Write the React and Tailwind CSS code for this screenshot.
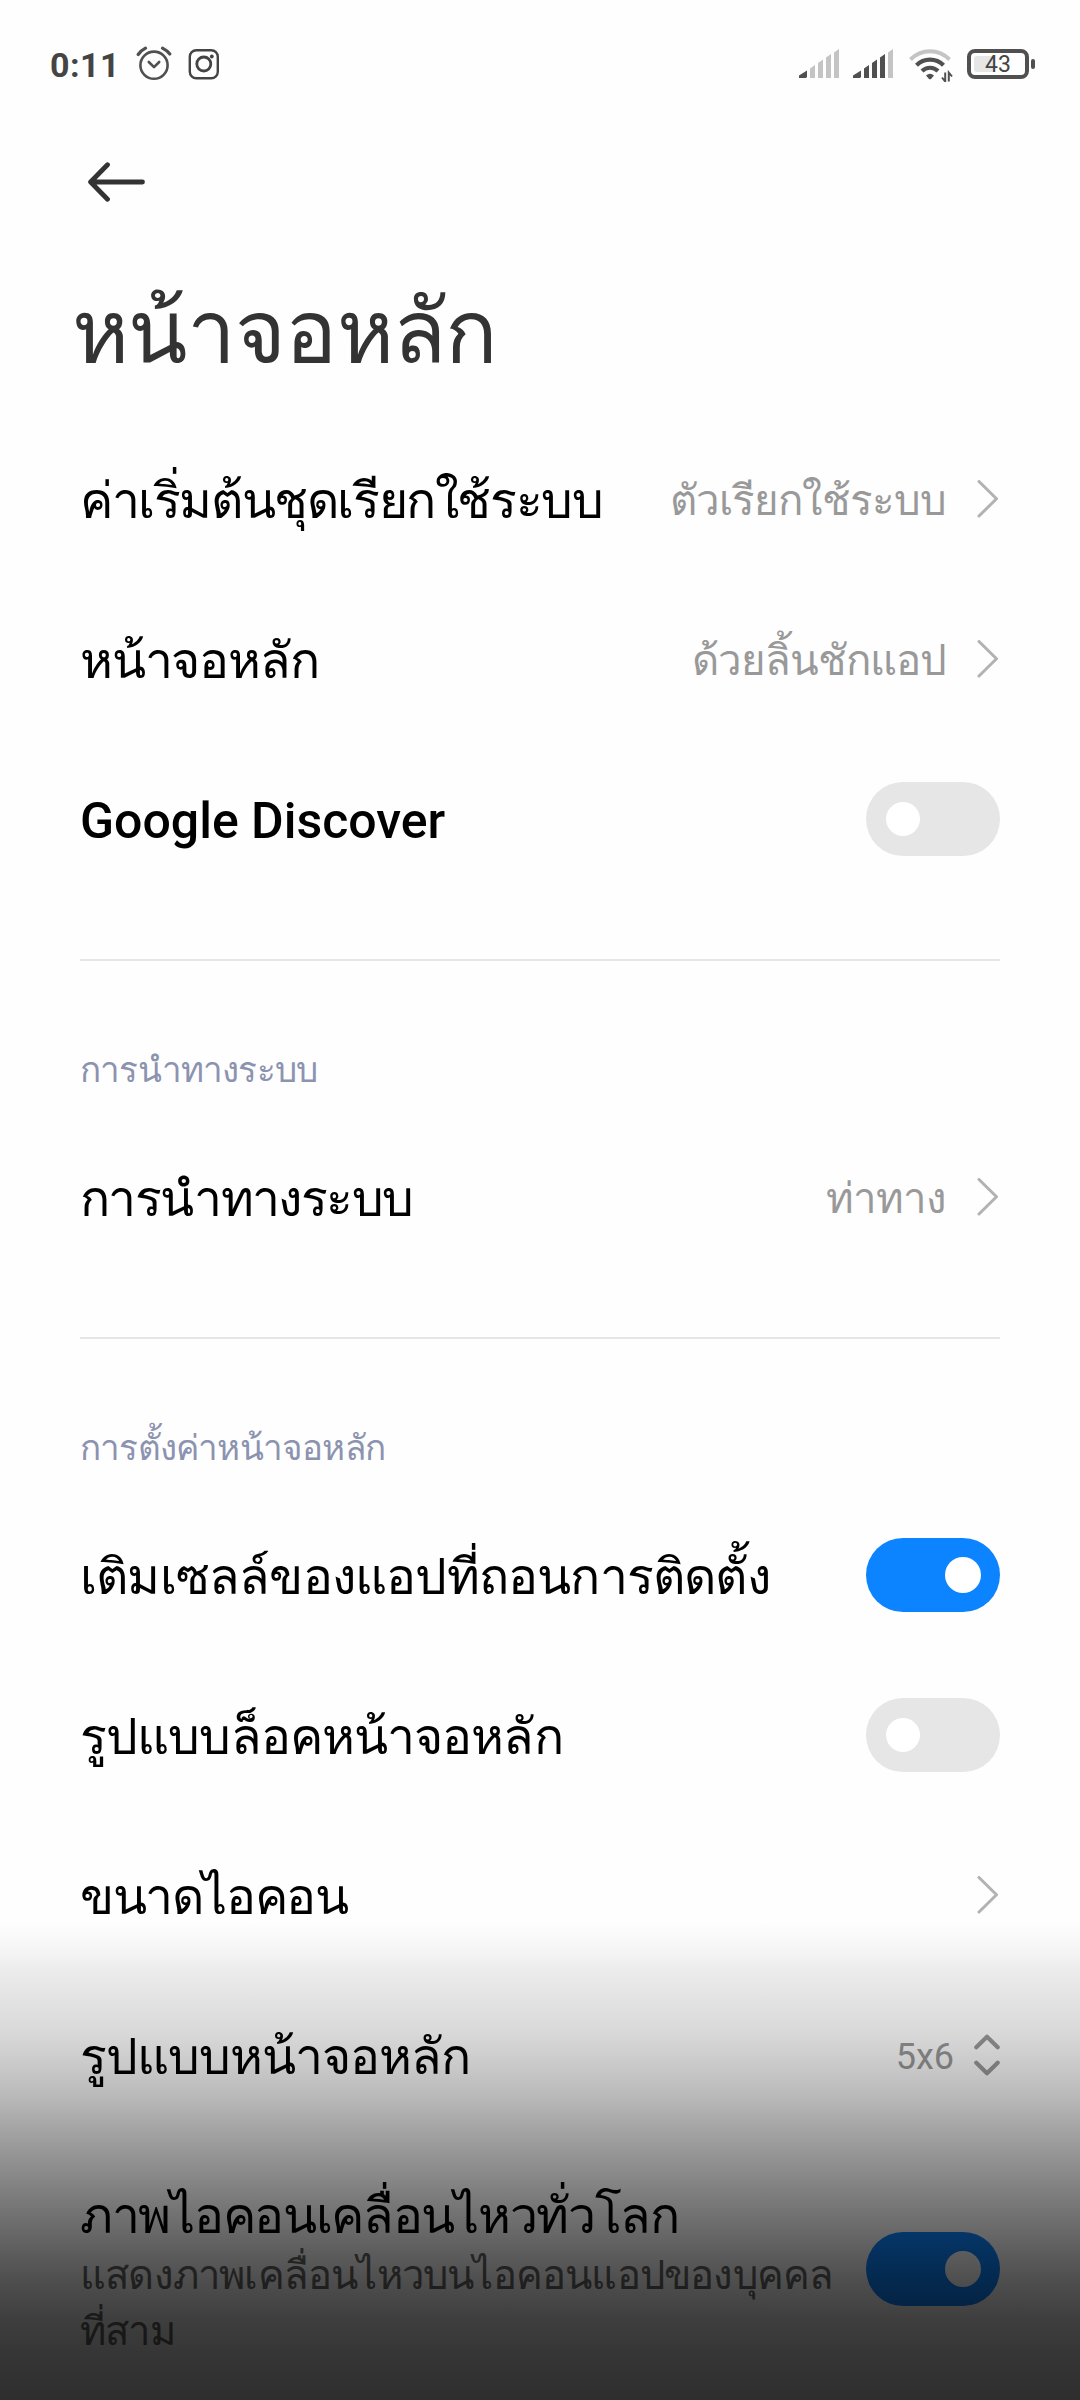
import React, { useState } from 'react';

const Chevron = () => (
  <svg width="21" height="38" viewBox="0 0 21 38" fill="none" className="mr-[2px] shrink-0">
    <path d="M2 1.5 L19.5 18.8 L2 36" stroke="#b2b2b2" strokeWidth="3" strokeLinecap="round" strokeLinejoin="round" />
  </svg>
);

const UpDown = () => (
  <svg width="26" height="42" viewBox="0 0 26 42" fill="none" className="shrink-0">
    <path d="M2.3 13.2 L13 2.8 L23.7 13.2 M2.3 28.8 L13 39.2 L23.7 28.8" stroke="#9a9a9a" strokeWidth="4.2" strokeLinecap="round" strokeLinejoin="round" />
  </svg>
);

function Toggle({ initial = false }) {
  const [on, setOn] = useState(initial);
  return (
    <button
      onClick={() => setOn(!on)}
      className={`flex h-[74px] w-[134px] shrink-0 items-center rounded-full ${on ? 'justify-end bg-[#0d84ff] pr-[19px]' : 'justify-start bg-[#e6e6e6] pl-[20px]'}`}
    >
      <span className={`rounded-full bg-white ${on ? 'size-[36px]' : 'size-[34px]'}`} />
    </button>
  );
}

function Row({ label, value, tracking = 'tracking-[-1.4px]', children }) {
  return (
    <div className="flex h-[160px] items-center">
      <div className={`flex-1 whitespace-nowrap pt-[4px] text-[50px] leading-[64px] text-black ${tracking}`}>{label}</div>
      {value && <div className="mr-[31px] whitespace-nowrap pt-[3px] text-[42px] leading-[56px] tracking-[-1px] text-[#999999]">{value}</div>}
      {children}
    </div>
  );
}

const Divider = () => <div className="h-[2px] bg-[#e6e6e6]" />;

const SectionLabel = ({ children }) => (
  <div className="flex h-[48px] items-center whitespace-nowrap pt-[3px] text-[35px] leading-[48px] tracking-[-0.8px] text-[#8c93b0]">{children}</div>
);

// each bar has a slanted top, the first one is a small wedge
const bars = [
  'M0 29 V26.5 L8 21.5 V28 L7 29 Z',
  'M11 29 V19.5 L16 16 V29 Z',
  'M19 29 V14 L24 10.5 V29 Z',
  'M27 29 V8.5 L32 5 V29 Z',
  'M35 29 V3.5 L40 0 V29 Z',
];

const Signal = ({ level }) => (
  <svg width="40" height="30" viewBox="0 0 40 30">
    {bars.map((d, i) => (
      <path key={i} d={d} fill={i < level ? '#505050' : '#c4c4c4'} />
    ))}
  </svg>
);

function StatusBar() {
  return (
    <div className="flex h-[128px] items-center justify-between pl-[50px] pr-[45px]">
      <div className="flex items-center">
        <span className="w-[86px] pt-[2px] font-[Roboto] text-[34px] font-bold leading-[40px] tracking-[0.5px] text-[#444444]">0:11</span>
        <svg width="36" height="36" viewBox="0 0 36 36" fill="none" stroke="#505050" strokeWidth="2.6" strokeLinecap="round">
          <circle cx="18" cy="19.2" r="13.6" />
          <path d="M12.8 16 L18 21.2 L23.2 16" strokeLinejoin="round" />
          <path d="M2.2 8.5 Q5 4.5 9.5 2.2 M26.5 2.2 Q31 4.5 33.8 8" strokeWidth="3.2" />
        </svg>
        <svg width="32" height="32" viewBox="0 0 32 32" fill="none" stroke="#444444" className="ml-[16px]">
          <rect x="1.8" y="2.2" width="28" height="28" rx="6.5" strokeWidth="2.4" />
          <circle cx="15.8" cy="16" r="7" strokeWidth="2.8" />
          <circle cx="23.8" cy="8.5" r="1.9" fill="#444444" stroke="none" />
        </svg>
      </div>
      <div className="flex items-center">
        <Signal level={1} />
        <div className="w-[14px]" />
        <Signal level={4} />
        <svg width="44" height="34" viewBox="0 0 44 34" fill="none" className="ml-[16px] mt-[2px]">
          <path d="M1.5 11.5 A27 27 0 0 1 40.5 11.5" stroke="#c4c4c4" strokeWidth="4" />
          <path d="M7.5 17.2 A19 19 0 0 1 34.5 17.2" stroke="#505050" strokeWidth="4.2" />
          <path d="M13 23 A11.5 11.5 0 0 1 29 23" stroke="#505050" strokeWidth="4.2" />
          <path d="M17 27.5 Q21 24 25 27.5 L22 31 Q21 31.7 20 31 Z" fill="#505050" />
          <path d="M36.2 24.5 V33.5 L33 29.5 M39.8 33.500 V24.5 L43 28.5" stroke="#505050" strokeWidth="2" />
        </svg>
        <div className="ml-[14px] flex h-[30px] w-[62px] items-center rounded-[8px] border-4 border-[#505050] px-[3px]">
          <div className="flex h-[16px] w-full items-center justify-center rounded-[3px] bg-linear-to-r from-[#e6e6e6] from-40% to-transparent to-40%">
            <span className="pt-px font-[Roboto] text-[23px] leading-[22px] text-[#444444]">43</span>
          </div>
        </div>
        <div className="ml-[2px] h-[10px] w-[4px] rounded-[2px] bg-[#505050]" />
      </div>
    </div>
  );
}

export default function App() {
  return (
    <div className="relative h-[2400px] w-[1080px] overflow-hidden bg-[#fefefe] font-[Roboto,sans-serif]">
      <StatusBar />

      {/* Header */}
      <div className="flex h-[108px] items-center pl-[88px]">
        <svg width="58" height="40" viewBox="0 0 58 40" fill="none">
          <path d="M19.5 2.8 L2.6 20 L19.5 37.2 M3 20 H54.5" stroke="#333333" strokeWidth="4.8" strokeLinecap="round" strokeLinejoin="round" />
        </svg>
      </div>
      <h1 className="flex h-[183px] items-center pl-[72px] pt-[8px] text-[87px] leading-[110px] tracking-[-0.7px] text-[#333333]">หน้าจอหลัก</h1>

      <div className="px-[80px]">
        <Row label="ค่าเริ่มต้นชุดเรียกใช้ระบบ" value="ตัวเรียกใช้ระบบ">
          <Chevron />
        </Row>
        <Row label="หน้าจอหลัก" value="ด้วยลิ้นชักแอป" tracking="tracking-[-1.2px]">
          <Chevron />
        </Row>
        <Row label={<span className="font-medium">Google Discover</span>} tracking="tracking-normal">
          <Toggle />
        </Row>

        <div className="pt-[60px] pb-[84px]">
          <Divider />
        </div>
        <SectionLabel>การนำทางระบบ</SectionLabel>
        <div className="h-[24px]" />
        <Row label="การนำทางระบบ" value="ท่าทาง" tracking="tracking-[-1.6px]">
          <Chevron />
        </Row>

        <div className="pt-[60px] pb-[84px]">
          <Divider />
        </div>
        <SectionLabel>การตั้งค่าหน้าจอหลัก</SectionLabel>
        <div className="h-[24px]" />
        <Row label="เติมเซลล์ของแอปที่ถอนการติดตั้ง" tracking="tracking-[-0.8px]">
          <Toggle initial />
        </Row>
        <Row label="รูปแบบล็อคหน้าจอหลัก" tracking="tracking-[-0.9px]">
          <Toggle />
        </Row>
        <Row label="ขนาดไอคอน">
          <Chevron />
        </Row>
        <Row label="รูปแบบหน้าจอหลัก" tracking="tracking-[-1px]">
          <span className="mr-[20px] pt-[3px] text-[36px] leading-[48px] text-[#999999]">5x6</span>
          <UpDown />
        </Row>

        <div className="flex h-[268px] items-center">
          <div className="flex-1 pt-[6px]">
            <div className="whitespace-nowrap text-[50px] leading-[64px] tracking-[-1.3px] text-black">ภาพไอคอนเคลื่อนไหวทั่วโลก</div>
            <div className="whitespace-nowrap text-[40px] leading-[56px] tracking-[-0.8px] text-[#666666]">
              แสดงภาพเคลื่อนไหวบนไอคอนแอปของบุคคล
              <br />
              ที่สาม
            </div>
          </div>
          <Toggle initial />
        </div>
      </div>

      {/* Bottom fade */}
      <div className="pointer-events-none absolute inset-x-0 bottom-0 h-[480px] bg-[linear-gradient(to_bottom,rgba(0,0,0,0)_0px,rgba(0,0,0,0.035)_30px,rgba(0,0,0,0.07)_50px,rgba(0,0,0,0.15)_113px,rgba(0,0,0,0.21)_148px,rgba(0,0,0,0.27)_176px,rgba(0,0,0,0.36)_212px,rgba(0,0,0,0.51)_275px,rgba(0,0,0,0.64)_334px,rgba(0,0,0,0.7)_366px,rgba(0,0,0,0.755)_401px,rgba(0,0,0,0.79)_433px,rgba(0,0,0,0.82)_480px)]" />
    </div>
  );
}
